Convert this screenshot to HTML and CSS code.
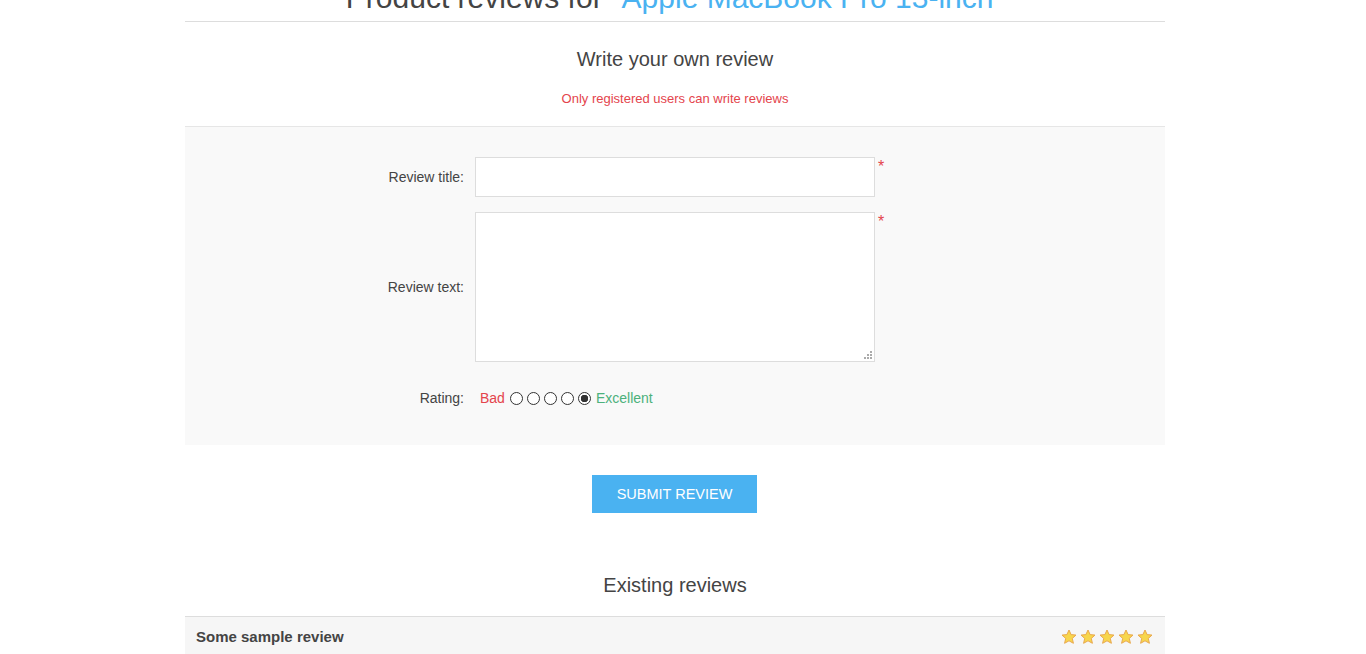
FILE: index.html
```html
<!DOCTYPE html>
<html>
<head>
<meta charset="utf-8">
<title>Product reviews</title>
<link rel="stylesheet" href="styles.css">
</head>
<body>
<div class="page">
  <div class="center">
    <div class="page-title">
      <h1>Product reviews for <a href="#">"Apple MacBook Pro 13-inch"</a></h1>
    </div>

    <div class="write-review">
      <div class="title">Write your own review</div>
      <div class="message-error">Only registered users can write reviews</div>
      <div class="form-fields">
        <div class="row">
          <label class="lbl">Review title:</label>
          <div class="field">
            <input class="text-input" type="text">
            <span class="required">*</span>
          </div>
        </div>
        <div class="row">
          <label class="lbl">Review text:</label>
          <div class="field">
            <div class="area-wrap">
              <textarea class="text-area"></textarea>
              <span class="grip"></span>
            </div>
            <span class="required">*</span>
          </div>
        </div>
        <div class="row rating-row">
          <label class="lbl">Rating:</label>
          <div class="rating">
            <span class="bad">Bad</span>
            <span class="radios">
              <input class="radio" type="radio" name="r">
              <input class="radio" type="radio" name="r">
              <input class="radio" type="radio" name="r">
              <input class="radio" type="radio" name="r">
              <input class="radio" type="radio" name="r" checked>
            </span>
            <span class="good">Excellent</span>
          </div>
        </div>
      </div>
      <div class="buttons">
        <button class="submit" type="button">Submit review</button>
      </div>
    </div>

    <div class="existing">
      <div class="title">Existing reviews</div>
      <div class="review-item">
        <div class="review-head">
          <strong class="review-title">Some sample review</strong>
          <div class="stars">
            <svg viewBox="0 0 16 16" width="16" height="16"><polygon points="8,1 10.1,5.6 15,6.1 11.3,9.4 12.4,14.3 8,11.8 3.6,14.3 4.7,9.4 1,6.1 5.9,5.6"/></svg>
            <svg viewBox="0 0 16 16" width="16" height="16"><polygon points="8,1 10.1,5.6 15,6.1 11.3,9.4 12.4,14.3 8,11.8 3.6,14.3 4.7,9.4 1,6.1 5.9,5.6"/></svg>
            <svg viewBox="0 0 16 16" width="16" height="16"><polygon points="8,1 10.1,5.6 15,6.1 11.3,9.4 12.4,14.3 8,11.8 3.6,14.3 4.7,9.4 1,6.1 5.9,5.6"/></svg>
            <svg viewBox="0 0 16 16" width="16" height="16"><polygon points="8,1 10.1,5.6 15,6.1 11.3,9.4 12.4,14.3 8,11.8 3.6,14.3 4.7,9.4 1,6.1 5.9,5.6"/></svg>
            <svg viewBox="0 0 16 16" width="16" height="16"><polygon points="8,1 10.1,5.6 15,6.1 11.3,9.4 12.4,14.3 8,11.8 3.6,14.3 4.7,9.4 1,6.1 5.9,5.6"/></svg>
          </div>
        </div>
      </div>
    </div>
  </div>
</div>
</body>
</html>
```

FILE: styles.css
```css
html, body {
  margin: 0;
  padding: 0;
  background: #fff;
  overflow: hidden;
}
body {
  font-family: Arial, "Liberation Sans", Helvetica, sans-serif;
  color: #444;
  font-size: 14px;
}
.page {
  width: 1350px;
}
.center {
  width: 980px;
  margin: 0 auto;
}
.page-title {
  margin-top: -25px;
  padding: 6px 10px;
  border-bottom: 1px solid #ddd;
  text-align: center;
}
.page-title h1 {
  margin: 0;
  font-size: 30px;
  font-weight: normal;
  line-height: 34px;
  color: #444;
}
.page-title h1 a {
  color: #4ab2f1;
  text-decoration: none;
}
.write-review {
  margin-top: 26px;
}
.title {
  text-align: center;
  font-size: 20px;
  line-height: 23px;
  color: #444;
}
.write-review .title {
  margin-bottom: 20px;
}
.message-error {
  text-align: center;
  color: #e4444c;
  font-size: 13px;
  line-height: 16px;
  margin-bottom: 19px;
}
.form-fields {
  background: #f9f9f9;
  border-top: 1px solid #e6e6e6;
  padding: 30px 15px 36px;
  display: flex;
  flex-direction: column;
  gap: 15px;
}
.row {
  display: grid;
  grid-template-columns: 264px 1fr;
  column-gap: 11px;
  align-items: center;
}
.lbl {
  text-align: right;
  font-size: 14px;
  color: #444;
}
.field {
  display: flex;
  align-items: flex-start;
}
.text-input {
  box-sizing: border-box;
  width: 400px;
  height: 40px;
  border: 1px solid #ddd;
  background: #fff;
  margin: 0;
  padding: 0 10px;
  outline: none;
}
.area-wrap {
  position: relative;
  width: 400px;
  height: 150px;
}
.text-area {
  box-sizing: border-box;
  width: 400px;
  height: 150px;
  border: 1px solid #ddd;
  background: #fff;
  margin: 0;
  padding: 10px;
  resize: none;
  outline: none;
  display: block;
}
.grip {
  position: absolute;
  right: 3px;
  bottom: 3px;
  width: 8px;
  height: 8px;
  background:
    linear-gradient(#aaa, #aaa) 6px 0 / 2px 2px no-repeat,
    linear-gradient(#aaa, #aaa) 3px 3px / 2px 2px no-repeat,
    linear-gradient(#aaa, #aaa) 6px 3px / 2px 2px no-repeat,
    linear-gradient(#aaa, #aaa) 0 6px / 2px 2px no-repeat,
    linear-gradient(#aaa, #aaa) 3px 6px / 2px 2px no-repeat,
    linear-gradient(#aaa, #aaa) 6px 6px / 2px 2px no-repeat;
}
.required {
  color: #e4444c;
  font-size: 16px;
  line-height: 16px;
  margin-left: 3px;
  margin-top: 2px;
}
.rating-row {
  padding-top: 10px;
}
.rating {
  display: flex;
  align-items: center;
  font-size: 14px;
  line-height: 22px;
  gap: 5px;
  padding-left: 5px;
}
.bad { color: #e4444c; }
.good { color: #4cb17c; }
.radios {
  display: flex;
  gap: 4px;
}
.radio {
  appearance: none;
  -webkit-appearance: none;
  width: 13px;
  height: 13px;
  margin: 0;
  border: 1px solid #333;
  border-radius: 50%;
  background: #fff;
  box-sizing: border-box;
}
.radio:checked {
  background: radial-gradient(circle, #333 0 3.5px, #fff 4px);
}
.buttons {
  text-align: center;
  padding-top: 30px;
}
.submit {
  background: #4ab2f1;
  color: #fff;
  border: none;
  height: 38px;
  width: 165px;
  margin-right: 1px;
  padding: 0;
  font-family: Arial, "Liberation Sans", Helvetica, sans-serif;
  font-size: 14.5px;
  text-transform: uppercase;
  cursor: pointer;
}
.existing {
  margin-top: 61px;
}
.existing .title {
  margin-bottom: 19px;
}
.review-item {
  border-top: 1px solid #ddd;
}
.review-head {
  background: #f6f6f6;
  display: flex;
  justify-content: space-between;
  align-items: center;
  padding: 10px 12px 10px 11px;
}
.review-title {
  font-size: 15px;
  font-weight: bold;
  color: #444;
  line-height: 20px;
}
.stars {
  display: flex;
  gap: 3px;
}
.stars svg polygon {
  fill: #f7d64c;
  stroke: #e9a84e;
  stroke-width: 1;
  stroke-linejoin: round;
}
```
